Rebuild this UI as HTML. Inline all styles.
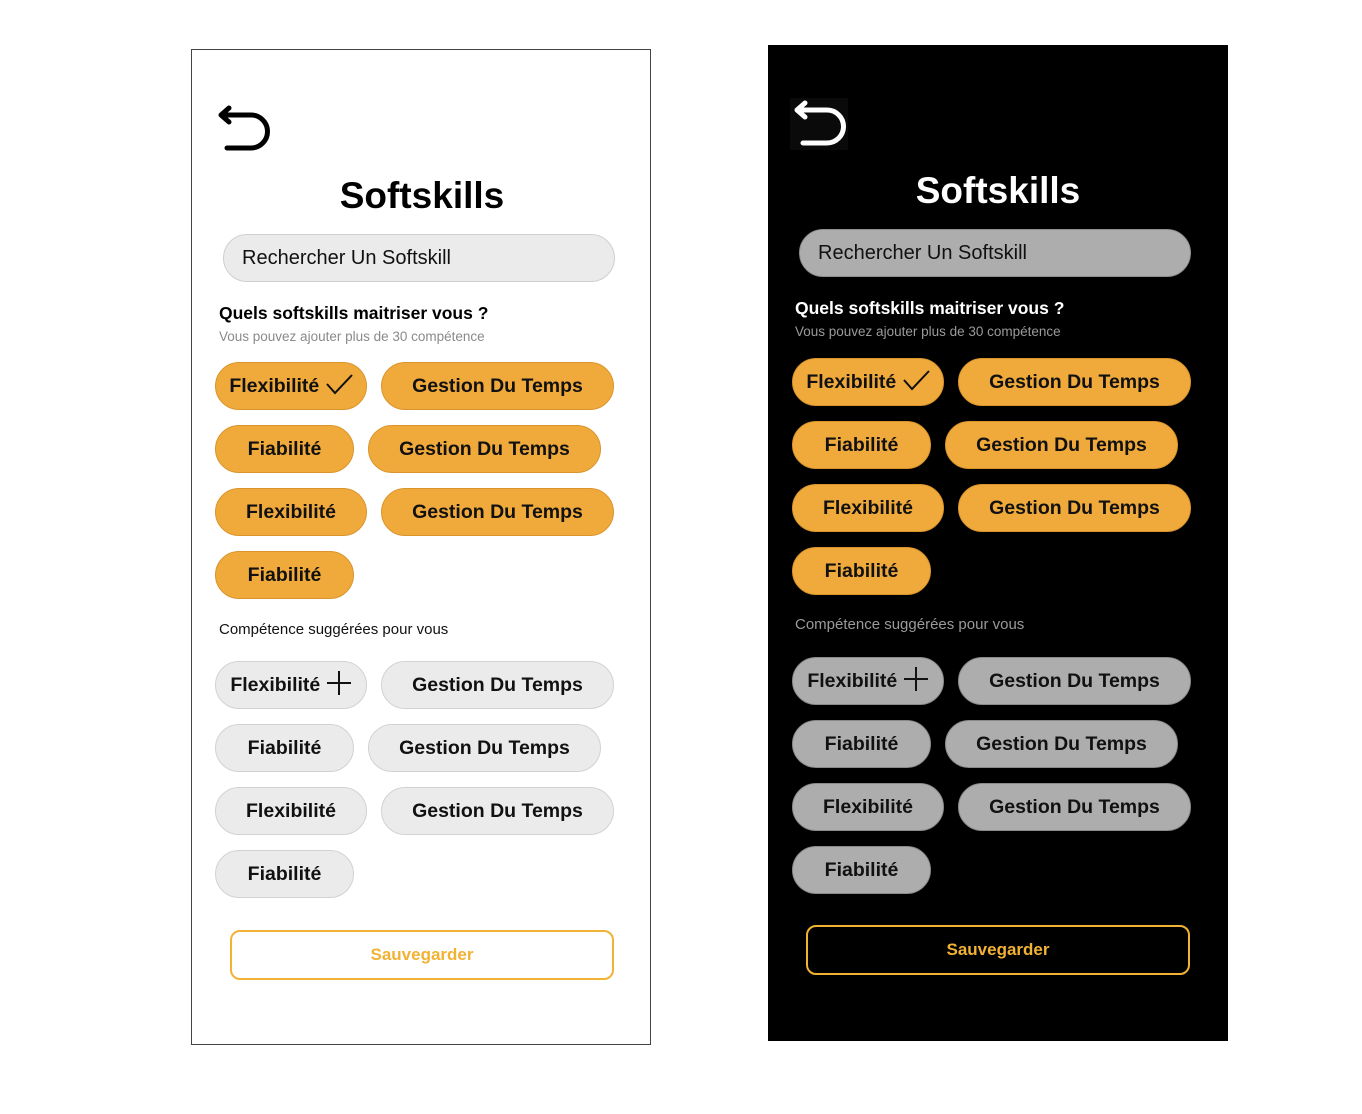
<!DOCTYPE html>
<html><head><meta charset="utf-8"><style>
*{margin:0;padding:0;box-sizing:border-box}
body{width:1362px;height:1114px;background:#fff;position:relative;overflow:hidden;font-family:"Liberation Sans",Arial,sans-serif}
.ph{position:absolute;width:460px;height:996px}
.l{left:191px;top:49px;border:1px solid #444;background:#fff}
.r{left:768px;top:45px;background:#000}
.ph>*{position:absolute}
.title{left:0;width:460px;text-align:center;top:125px;font-size:37px;font-weight:bold}
.search{left:31px;top:184px;width:392px;height:48px;border-radius:24px;padding-left:18px;line-height:46px;font-size:20px}
.q{left:27px;top:253px;font-size:17.5px;font-weight:bold}
.s{left:27px;top:279px;font-size:13.5px}
.c{height:48px;border-radius:24px;font-size:19.5px;font-weight:bold;text-align:center;line-height:46px;border:1px solid}
.sug{left:27px;top:571px;font-size:15px}
.btn{left:38px;top:880px;width:384px;height:50px;border:2px solid #f2b233;border-radius:10px;text-align:center;line-height:46px;font-size:17px;font-weight:bold;color:#f2b233}
.l .title,.l .q{color:#000}.l .s{color:#8a8a8a}.l .sug{color:#111}
.r .title,.r .q{color:#fff}.r .s{color:#9a9a9a}.r .sug{color:#9a9a9a}
.l .search{background:#ebebeb;border:1px solid #cfcfcf;color:#111}
.r .search{background:#adadad;border:1px solid #8f8f8f;color:#111}
.o{background:#f0a93b;border-color:#d9952c;color:#111}
.l .g{background:#ebebeb;border-color:#d2d2d2;color:#111}
.r .g{background:#adadad;border-color:#8a8a8a;color:#111}
</style></head><body>
<div class="ph l">
<svg style="left:25px;top:55px" width="54" height="48" viewBox="0 0 54 48"><path d="M12 3 L4 10 L12 17 M4 10 H34 A14 14 0 0 1 34 43 H10" fill="none" stroke="#000" stroke-width="5" stroke-linecap="round" stroke-linejoin="round"/></svg>
<div class="title">Softskills</div>
<div class="search">Rechercher Un Softskill</div>
<div class="q">Quels softskills maitriser vous ?</div>
<div class="s">Vous pouvez ajouter plus de 30 compétence</div>
<div class="c o" style="left:23px;top:312px;width:152px">Flexibilité <svg width="28" height="24" viewBox="0 0 28 24" style="vertical-align:-4px"><path d="M2 12 L10 21 L27 3" fill="none" stroke="#111" stroke-width="2"/></svg></div>
<div class="c o" style="left:189px;top:312px;width:233px">Gestion Du Temps</div>
<div class="c o" style="left:23px;top:375px;width:139px">Fiabilité</div>
<div class="c o" style="left:176px;top:375px;width:233px">Gestion Du Temps</div>
<div class="c o" style="left:23px;top:438px;width:152px">Flexibilité</div>
<div class="c o" style="left:189px;top:438px;width:233px">Gestion Du Temps</div>
<div class="c o" style="left:23px;top:501px;width:139px">Fiabilité</div>
<div class="sug">Compétence suggérées pour vous</div>
<div class="c g" style="left:23px;top:611px;width:152px">Flexibilité <svg width="26" height="26" viewBox="0 0 26 26" style="vertical-align:-5px"><path d="M13 1 V25 M1 13 H25" fill="none" stroke="#111" stroke-width="2"/></svg></div>
<div class="c g" style="left:189px;top:611px;width:233px">Gestion Du Temps</div>
<div class="c g" style="left:23px;top:674px;width:139px">Fiabilité</div>
<div class="c g" style="left:176px;top:674px;width:233px">Gestion Du Temps</div>
<div class="c g" style="left:23px;top:737px;width:152px">Flexibilité</div>
<div class="c g" style="left:189px;top:737px;width:233px">Gestion Du Temps</div>
<div class="c g" style="left:23px;top:800px;width:139px">Fiabilité</div>
<div class="btn">Sauvegarder</div>
</div>
<div class="ph r">
<svg style="left:22px;top:53px" width="58" height="52" viewBox="0 0 58 52"><rect x="0" y="0" width="58" height="52" fill="#0a0a0a"/><path d="M15 5 L7 12 L15 19 M7 12 H37 A14 14 0 0 1 37 45 H13" fill="none" stroke="#fff" stroke-width="5" stroke-linecap="round" stroke-linejoin="round"/></svg>
<div class="title">Softskills</div>
<div class="search">Rechercher Un Softskill</div>
<div class="q">Quels softskills maitriser vous ?</div>
<div class="s">Vous pouvez ajouter plus de 30 compétence</div>
<div class="c o" style="left:24px;top:313px;width:152px">Flexibilité <svg width="28" height="24" viewBox="0 0 28 24" style="vertical-align:-4px"><path d="M2 12 L10 21 L27 3" fill="none" stroke="#111" stroke-width="2"/></svg></div>
<div class="c o" style="left:190px;top:313px;width:233px">Gestion Du Temps</div>
<div class="c o" style="left:24px;top:376px;width:139px">Fiabilité</div>
<div class="c o" style="left:177px;top:376px;width:233px">Gestion Du Temps</div>
<div class="c o" style="left:24px;top:439px;width:152px">Flexibilité</div>
<div class="c o" style="left:190px;top:439px;width:233px">Gestion Du Temps</div>
<div class="c o" style="left:24px;top:502px;width:139px">Fiabilité</div>
<div class="sug">Compétence suggérées pour vous</div>
<div class="c g" style="left:24px;top:612px;width:152px">Flexibilité <svg width="26" height="26" viewBox="0 0 26 26" style="vertical-align:-5px"><path d="M13 1 V25 M1 13 H25" fill="none" stroke="#111" stroke-width="2"/></svg></div>
<div class="c g" style="left:190px;top:612px;width:233px">Gestion Du Temps</div>
<div class="c g" style="left:24px;top:675px;width:139px">Fiabilité</div>
<div class="c g" style="left:177px;top:675px;width:233px">Gestion Du Temps</div>
<div class="c g" style="left:24px;top:738px;width:152px">Flexibilité</div>
<div class="c g" style="left:190px;top:738px;width:233px">Gestion Du Temps</div>
<div class="c g" style="left:24px;top:801px;width:139px">Fiabilité</div>
<div class="btn">Sauvegarder</div>
</div>
</body></html>
